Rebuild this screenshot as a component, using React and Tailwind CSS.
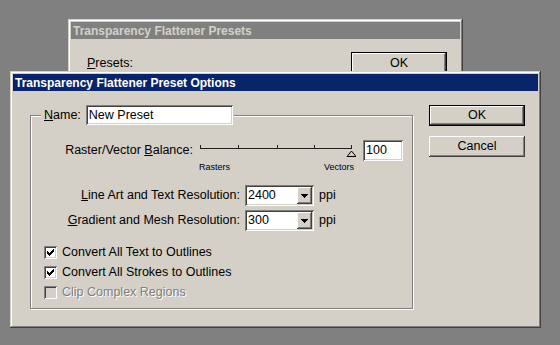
import React from 'react';

// classic win2k bevels
const windowFrame =
  'shadow-[inset_-1px_-1px_#404040,inset_1px_1px_#d4d0c8,inset_-2px_-2px_#808080,inset_2px_2px_#fff]';
const raised =
  'shadow-[inset_-1px_-1px_#404040,inset_1px_1px_#fff,inset_-2px_-2px_#808080,inset_2px_2px_#d4d0c8]';
const defaultRaised =
  'border border-black shadow-[inset_-1px_-1px_#404040,inset_1px_1px_#fff,inset_-2px_-2px_#808080]';
const sunken =
  'shadow-[inset_1px_1px_#808080,inset_-1px_-1px_#fff,inset_2px_2px_#404040,inset_-2px_-2px_#d4d0c8]';

const checkRows = ['......X', '.....XX', 'X...XXX', 'XX.XXX.', 'XXXXX..', '.XXX...', '..X....'];

const CheckMark = () => (
  <svg width="7" height="7" viewBox="0 0 7 7" shapeRendering="crispEdges">
    {checkRows.map((row, y) =>
      row.split('').map((c, x) =>
        c === 'X' ? <rect key={`${x}-${y}`} x={x} y={y} width="1" height="1" fill="#000" /> : null
      )
    )}
  </svg>
);

const Check = ({ checked, disabled, children }) => (
  <div className="flex h-[20px] items-center pl-[13px]">
    <span
      className={`flex h-[13px] w-[13px] items-center justify-center ${
        disabled ? 'bg-[#d4d0c8]' : 'bg-white'
      } ${sunken}`}
    >
      {checked && <CheckMark />}
    </span>
    <span
      className={`ml-[5px] whitespace-nowrap ${
        disabled ? 'text-[#808080] [text-shadow:1px_1px_0_#fff]' : ''
      }`}
    >
      {children}
    </span>
  </div>
);

const Combo = ({ value }) => (
  <div className={`ml-[5px] flex h-[21px] w-[69px] bg-white p-[2px] ${sunken}`}>
    <span className="flex-1 pl-[1px] leading-[17px]">{value}</span>
    <span className={`flex w-[15px] items-center justify-center bg-[#d4d0c8] ${raised}`}>
      <svg width="7" height="4" viewBox="0 0 7 4" shapeRendering="crispEdges">
        <rect x="0" y="0" width="7" height="1" fill="#000" />
        <rect x="1" y="1" width="5" height="1" fill="#000" />
        <rect x="2" y="2" width="3" height="1" fill="#000" />
        <rect x="3" y="3" width="1" height="1" fill="#000" />
      </svg>
    </span>
  </div>
);

const Slider = () => (
  <svg width="160" height="21" viewBox="0 0 160 21" className="ml-[3px]" shapeRendering="crispEdges">
    <rect x="4" y="8" width="152" height="1" fill="#202020" />
    {[4, 42, 81, 118, 155].map((x) => (
      <rect key={x} x={x} y="5" width="1" height="3" fill="#202020" />
    ))}
    <polygon points="155.5,11 151,16.5 160,16.5" fill="#d4d0c8" stroke="#000" strokeWidth="1" shapeRendering="auto" />
    <rect x="151" y="16" width="9" height="1" fill="#000" />
  </svg>
);

const Button = ({ children, isDefault, className = '' }) => (
  <div
    className={`flex h-[21px] w-[96px] items-center justify-center bg-[#d4d0c8] ${
      isDefault ? defaultRaised : raised
    } ${className}`}
  >
    {children}
  </div>
);

export default function App() {
  return (
    <div className="relative h-[345px] w-[560px] overflow-hidden bg-[#808080] font-['Liberation_Sans',Arial,sans-serif] text-[12.5px] text-black">
      {/* dialog behind */}
      <div className={`absolute left-[68px] top-[19px] flex h-[90px] w-[395px] flex-col bg-[#d4d0c8] p-[3px] ${windowFrame}`}>
        <div className="flex h-[17px] items-center bg-[#808080] pl-[2px] text-[12px] font-bold text-[#d4d0c8]">
          Transparency Flattener Presets
        </div>
        <div className="mt-[13px] flex items-center justify-between pl-[16px] pr-[13px]">
          <span>
            <span className="underline">P</span>resets:
          </span>
          <Button isDefault className="h-[22px]">OK</Button>
        </div>
      </div>

      {/* front dialog */}
      <div className={`absolute left-[10px] top-[71px] flex h-[257px] w-[531px] flex-col bg-[#d4d0c8] p-[3px] ${windowFrame}`}>
        <div className="flex h-[17px] items-center bg-[#0a246a] pl-[2px] text-[12px] font-bold text-white">
          Transparency Flattener Preset Options
        </div>

        <div className="mt-[14px] flex pl-[17px]">
          <fieldset className="h-[204px] w-[383px] border border-[#808080] shadow-[1px_1px_0_#fff,inset_1px_1px_0_#fff]">
            <legend className="ml-[10px] bg-[#d4d0c8] pl-[3px] pr-[1px]">
              <div className="flex items-center">
                <span>
                  <span className="underline">N</span>ame:
                </span>
                <div className={`ml-[5px] h-[20px] w-[147px] bg-white pl-[3px] leading-[20px] ${sunken}`}>
                  New Preset
                </div>
              </div>
            </legend>

            <div className="flex flex-col">
              <div className="mt-[15px] flex h-[21px] items-center">
                <span className="w-[162px] whitespace-nowrap text-right">
                  Raster/Vector <span className="underline">B</span>alance:
                </span>
                <Slider />
                <div className={`ml-[7px] h-[21px] w-[40px] bg-white pl-[3px] leading-[21px] ${sunken}`}>100</div>
              </div>

              <div className="flex h-[14px] items-center pl-[168px]">
                <div className="flex w-[155px] justify-between text-[9px]">
                  <span>Rasters</span>
                  <span>Vectors</span>
                </div>
              </div>

              <div className="mt-[10px] flex h-[21px] items-center">
                <span className="w-[209px] whitespace-nowrap text-right">
                  <span className="underline">L</span>ine Art and Text Resolution:
                </span>
                <Combo value="2400" />
                <span className="ml-[5px]">ppi</span>
              </div>

              <div className="mt-[4px] flex h-[21px] items-center">
                <span className="w-[209px] whitespace-nowrap text-right">
                  <span className="underline">G</span>radient and Mesh Resolution:
                </span>
                <Combo value="300" />
                <span className="ml-[5px]">ppi</span>
              </div>

              <div className="mt-[11px] flex flex-col">
                <Check checked>Convert All Text to Outlines</Check>
                <Check checked>Convert All Strokes to Outlines</Check>
                <Check disabled>Clip Complex Regions</Check>
              </div>
            </div>
          </fieldset>

          <div className="ml-[16px] flex flex-col gap-[10px]">
            <Button isDefault>OK</Button>
            <Button>Cancel</Button>
          </div>
        </div>
      </div>
    </div>
  );
}
